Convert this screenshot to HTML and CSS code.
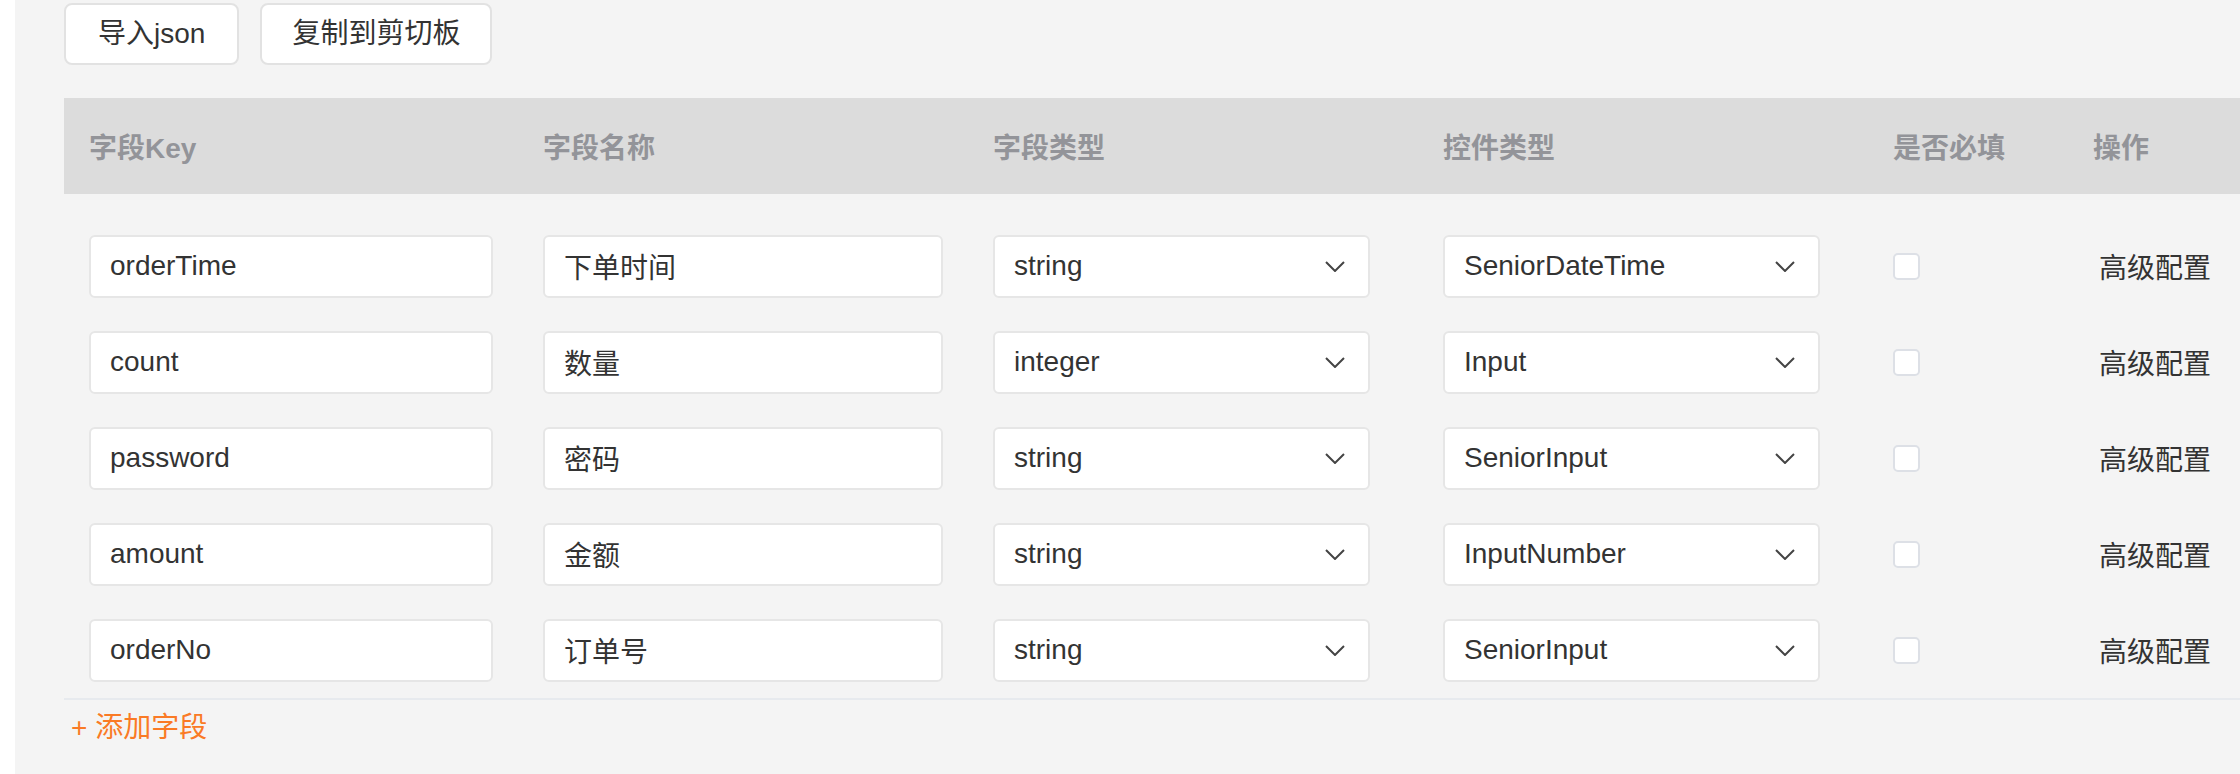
FILE: index.html
```html
<!DOCTYPE html>
<html lang="zh-CN">
<head>
<meta charset="utf-8">
<title>字段配置</title>
<link rel="stylesheet" href="styles.css">
</head>
<body>
<div class="page">
  <div class="toolbar">
    <button class="btn btn-import">导入json</button>
    <button class="btn">复制到剪切板</button>
  </div>
  <div class="table">
    <div class="thead">
      <div class="th">字段Key</div>
      <div class="th">字段名称</div>
      <div class="th">字段类型</div>
      <div class="th">控件类型</div>
      <div class="th">是否必填</div>
      <div class="th">操作</div>
    </div>
    <div class="tbody">
      <div class="tr">
        <div class="td"><div class="input w1">orderTime</div></div>
        <div class="td"><div class="input w2">下单时间</div></div>
        <div class="td"><div class="select"><span>string</span><svg class="chev" viewBox="0 0 20 11"><polyline points="1,1 10,10 19,1"/></svg></div></div>
        <div class="td"><div class="select"><span>SeniorDateTime</span><svg class="chev" viewBox="0 0 20 11"><polyline points="1,1 10,10 19,1"/></svg></div></div>
        <div class="td"><span class="checkbox"></span></div>
        <div class="td"><span class="action">高级配置</span></div>
      </div>
      <div class="tr">
        <div class="td"><div class="input w1">count</div></div>
        <div class="td"><div class="input w2">数量</div></div>
        <div class="td"><div class="select"><span>integer</span><svg class="chev" viewBox="0 0 20 11"><polyline points="1,1 10,10 19,1"/></svg></div></div>
        <div class="td"><div class="select"><span>Input</span><svg class="chev" viewBox="0 0 20 11"><polyline points="1,1 10,10 19,1"/></svg></div></div>
        <div class="td"><span class="checkbox"></span></div>
        <div class="td"><span class="action">高级配置</span></div>
      </div>
      <div class="tr">
        <div class="td"><div class="input w1">password</div></div>
        <div class="td"><div class="input w2">密码</div></div>
        <div class="td"><div class="select"><span>string</span><svg class="chev" viewBox="0 0 20 11"><polyline points="1,1 10,10 19,1"/></svg></div></div>
        <div class="td"><div class="select"><span>SeniorInput</span><svg class="chev" viewBox="0 0 20 11"><polyline points="1,1 10,10 19,1"/></svg></div></div>
        <div class="td"><span class="checkbox"></span></div>
        <div class="td"><span class="action">高级配置</span></div>
      </div>
      <div class="tr">
        <div class="td"><div class="input w1">amount</div></div>
        <div class="td"><div class="input w2">金额</div></div>
        <div class="td"><div class="select"><span>string</span><svg class="chev" viewBox="0 0 20 11"><polyline points="1,1 10,10 19,1"/></svg></div></div>
        <div class="td"><div class="select"><span>InputNumber</span><svg class="chev" viewBox="0 0 20 11"><polyline points="1,1 10,10 19,1"/></svg></div></div>
        <div class="td"><span class="checkbox"></span></div>
        <div class="td"><span class="action">高级配置</span></div>
      </div>
      <div class="tr">
        <div class="td"><div class="input w1">orderNo</div></div>
        <div class="td"><div class="input w2">订单号</div></div>
        <div class="td"><div class="select"><span>string</span><svg class="chev" viewBox="0 0 20 11"><polyline points="1,1 10,10 19,1"/></svg></div></div>
        <div class="td"><div class="select"><span>SeniorInput</span><svg class="chev" viewBox="0 0 20 11"><polyline points="1,1 10,10 19,1"/></svg></div></div>
        <div class="td"><span class="checkbox"></span></div>
        <div class="td"><span class="action">高级配置</span></div>
      </div>
    </div>
  </div>
  <div class="add">+ 添加字段</div>
</div>
</body>
</html>
```

FILE: styles.css
```css
* { box-sizing: border-box; }
html, body {
  margin: 0;
  padding: 0;
  background: #ffffff;
}
body {
  font-family: "Liberation Sans", "Noto Sans CJK SC", sans-serif;
  font-size: 28px;
  color: #333333;
}
.page {
  margin-left: 15px;
  height: 774px;
  background: #f4f4f4;
  padding: 3px 0 0 49px;
  overflow: hidden;
}
.toolbar {
  display: flex;
  gap: 21px;
  height: 62px;
}
.btn {
  height: 62px;
  padding: 0 30px;
  background: #ffffff;
  border: 2px solid #e2e2e2;
  border-radius: 8px;
  font-family: inherit;
  font-size: 28px;
  color: #333333;
  line-height: 1;
}
.btn-import {
  padding: 0 32px;
}
.table {
  margin-top: 33px;
}
.thead,
.tr {
  display: grid;
  grid-template-columns: 454px 450px 450px 450px 200px 1fr;
  align-items: center;
}
.thead {
  height: 96px;
  background: #dcdcdc;
}
.th {
  padding-left: 25px;
  font-weight: 700;
  color: #939499;
}
.tbody {
  padding-top: 24px;
  border-bottom: 2px solid #e7eaee;
}
.tr {
  height: 96px;
}
.td {
  padding-left: 25px;
  display: flex;
  align-items: center;
}
.input,
.select {
  height: 63px;
  background: #ffffff;
  border: 2px solid #e6e6e6;
  border-radius: 6px;
  display: flex;
  align-items: center;
  padding-left: 19px;
  color: #333333;
}
.w1 { width: 404px; }
.w2 { width: 400px; }
.select {
  width: 377px;
  justify-content: space-between;
  padding-right: 23px;
}
.chev {
  width: 20px;
  height: 11px;
  fill: none;
  stroke: #444444;
  stroke-width: 2;
}
.checkbox {
  display: block;
  width: 27px;
  height: 27px;
  background: #ffffff;
  border: 2px solid #dde0e6;
  border-radius: 5px;
}
.action {
  margin-left: 6px;
  color: #333333;
}
.add {
  padding: 8px 0 0 7px;
  line-height: 40px;
  color: #fa7a25;
}
```
